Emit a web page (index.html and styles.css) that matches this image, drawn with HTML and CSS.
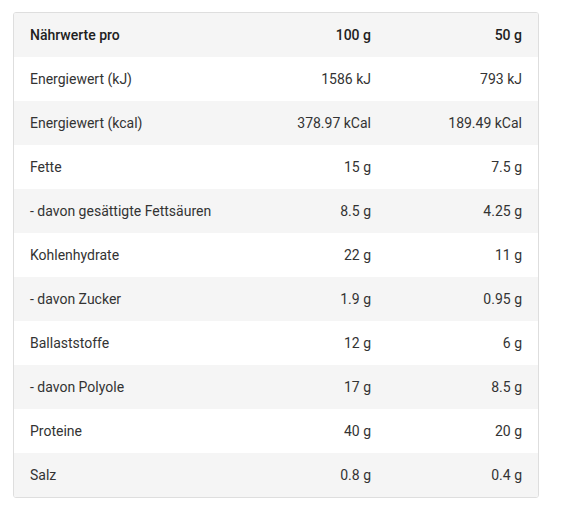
FILE: index.html
```html
<!DOCTYPE html>
<html lang="de">
<head>
<meta charset="utf-8">
<link rel="stylesheet" href="styles.css">
</head>
<body>
<div class="card">
<table class="nutri">
<colgroup><col class="c1"><col class="c2"><col class="c3"></colgroup>
<thead>
<tr><th>Nährwerte pro</th><th class="num">100 g</th><th class="num">50 g</th></tr>
</thead>
<tbody>
<tr><td>Energiewert (kJ)</td><td class="num">1586 kJ</td><td class="num">793 kJ</td></tr>
<tr><td>Energiewert (kcal)</td><td class="num">378.97 kCal</td><td class="num">189.49 kCal</td></tr>
<tr><td>Fette</td><td class="num">15 g</td><td class="num">7.5 g</td></tr>
<tr><td>- davon gesättigte Fettsäuren</td><td class="num">8.5 g</td><td class="num">4.25 g</td></tr>
<tr><td>Kohlenhydrate</td><td class="num">22 g</td><td class="num">11 g</td></tr>
<tr><td>- davon Zucker</td><td class="num">1.9 g</td><td class="num">0.95 g</td></tr>
<tr><td>Ballaststoffe</td><td class="num">12 g</td><td class="num">6 g</td></tr>
<tr><td>- davon Polyole</td><td class="num">17 g</td><td class="num">8.5 g</td></tr>
<tr><td>Proteine</td><td class="num">40 g</td><td class="num">20 g</td></tr>
<tr><td>Salz</td><td class="num">0.8 g</td><td class="num">0.4 g</td></tr>
</tbody>
</table>
</div>
</body>
</html>
```
FILE: styles.css
```css
html, body {
  margin: 0;
  padding: 0;
  background: #fff;
}
body {
  font-family: Roboto, "Liberation Sans", sans-serif;
  font-size: 14px;
  color: #212121;
  padding: 12px 0 0 13px;
}
.card {
  width: 526px;
  box-sizing: border-box;
  border: 1px solid #dedede;
  border-radius: 3px;
  overflow: hidden;
}
.nutri {
  width: 100%;
  border-collapse: collapse;
  table-layout: fixed;
}
.c1 { width: 222px; }
.c2 { width: 151px; }
.c3 { width: 151px; }
.nutri th, .nutri td {
  height: 44px;
  padding: 0 16px;
  box-sizing: border-box;
  text-align: left;
  vertical-align: middle;
  white-space: nowrap;
  line-height: 20px;
}
.nutri th {
  font-weight: 500;
  color: #212121;
}
.nutri td {
  color: #333;
}
.nutri .num {
  text-align: right;
}
.nutri thead tr,
.nutri tbody tr:nth-child(even) {
  background: #f5f5f5;
}
```
